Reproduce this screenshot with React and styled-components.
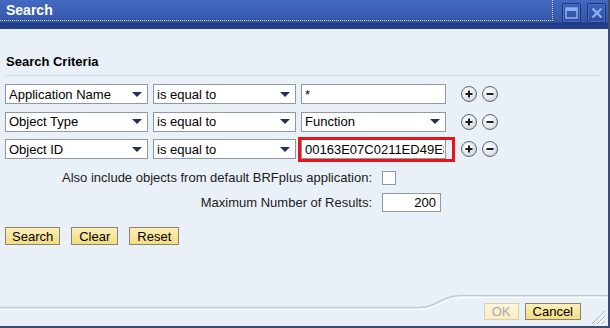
import React from 'react';
import styled, { createGlobalStyle } from 'styled-components';

const Global = createGlobalStyle`
   html, body {
      margin: 0;
      padding: 0;
      background: #e9f0f8;
   }
   body {
      font-family: 'Liberation Sans', Arial, sans-serif;
      font-size: 13px;
      color: #000;
   }
`;

const Window = styled.div`
   width: 610px;
   height: 328px;
   box-sizing: border-box;
   display: flex;
   flex-direction: column;
   background: #e9f0f8;
   border-right: 2px solid #3d4d74;
   border-bottom: 2px solid #3d4d74;
   overflow: hidden;
`;

const TitleBar = styled.div`
   height: 29px;
   flex: none;
   display: flex;
   align-items: flex-start;
   background: linear-gradient(
      to bottom,
      #4469c2 0px,
      #3c60b7 10px,
      #3457a9 22px,
      #1f3b85 23px,
      #213f8a 29px
   );
`;

const TitleFocus = styled.div`
   flex: 1;
   height: 21px;
   box-sizing: border-box;
   border: 1px dotted #c9d3ea;
   border-top: none;
   border-left: none;
   display: flex;
   align-items: center;
   padding-left: 6px;
   color: #fff;
   font-weight: bold;
   font-size: 14px;
`;

const WinButtons = styled.div`
   display: flex;
   gap: 6px;
   padding: 3px 2px 0 9px;
`;

const WinButton = styled.div`
   width: 19px;
   height: 20px;
   box-sizing: border-box;
   border: 1px solid #1d3477;
   border-radius: 2px;
   background: linear-gradient(#3d62bb, #2d4e9f);
   box-shadow: inset 0 0 0 1px #4a6fc6;
   display: flex;
   align-items: center;
   justify-content: center;
`;

const Body = styled.div`
   flex: 1;
   padding: 25px 0 0 5px;
   display: flex;
   flex-direction: column;
`;

const SectionTitle = styled.div`
   font-weight: bold;
   font-size: 13px;
   padding-left: 1px;
   padding-bottom: 6px;
   border-bottom: 1px solid #cfdae7;
   margin-right: 8px;
`;

const Criteria = styled.div`
   display: flex;
   flex-direction: column;
   gap: 7.5px;
   margin-top: 8px;
`;

const Row = styled.div`
   display: flex;
   align-items: center;
`;

const Field = styled.div`
   position: relative;
   width: ${p => p.w}px;
   height: 20px;
   margin-right: ${p => p.mr || 0}px;
   box-sizing: border-box;
   border: 1px solid #8e98a6;
   background: #fff;
   display: flex;
   align-items: center;
   padding-left: 3px;
   white-space: nowrap;
   overflow: ${p => (p.clip ? 'hidden' : 'visible')};
`;

const FieldText = styled.span`
   flex: 1;
   overflow: hidden;
   white-space: nowrap;
   margin-right: ${p => (p.clip ? 1 : 0)}px;
`;

const Arrow = styled.span`
   width: 0;
   height: 0;
   margin-right: 5px;
   border-left: 5px solid transparent;
   border-right: 5px solid transparent;
   border-top: 5px solid #22305a;
`;

const Highlight = styled.div`
   position: relative;
   &::after {
      content: '';
      position: absolute;
      left: -3px;
      top: -2px;
      right: -9px;
      bottom: -3px;
      border: 3px solid #e8141a;
      pointer-events: none;
   }
`;

const RoundButtons = styled.div`
   display: flex;
   gap: 5px;
   margin-left: 15px;
`;

const Round = styled.div`
   width: 16px;
   height: 16px;
   box-sizing: border-box;
   border-radius: 50%;
   border: 1px solid #5e6673;
   background: radial-gradient(circle at 40% 35%, #ffffff 0%, #e6e9ee 50%, #b8bec8 100%);
   display: flex;
   align-items: center;
   justify-content: center;
`;

const Options = styled.div`
   display: grid;
   grid-template-columns: 367px auto;
   column-gap: 10px;
   row-gap: 8px;
   align-items: center;
   margin-top: 11px;
`;

const OptionLabel = styled.div`
   text-align: right;
   color: #1b1b1b;
`;

const Checkbox = styled.div`
   width: 14px;
   height: 14px;
   box-sizing: border-box;
   border: 1px solid #8e98a6;
   background: #fff;
`;

const NumberBox = styled.div`
   width: 59px;
   height: 19px;
   box-sizing: border-box;
   border: 1px solid #8e98a6;
   background: #fff;
   text-align: right;
   padding-right: 4px;
   line-height: 17px;
`;

const ActionRow = styled.div`
   display: flex;
   gap: 11px;
   margin-top: 15px;
`;

const Button = styled.div`
   height: ${p => p.h || 18}px;
   box-sizing: border-box;
   padding: 0 ${p => p.px || 7}px;
   display: flex;
   align-items: center;
   border: 1px solid ${p => (p.disabled ? '#d8d1ad' : '#8a8571')};
   background: ${p =>
      p.disabled
         ? 'linear-gradient(#fdf7dd, #f8ecc0)'
         : 'linear-gradient(#fdf0b8, #f4dc82)'};
   color: ${p => (p.disabled ? '#a9a9a4' : '#000')};
   font-size: 13px;
`;

const Footer = styled.div`
   position: relative;
   height: 34px;
   flex: none;
   display: flex;
   justify-content: flex-end;
   align-items: flex-start;
   padding-top: 11px;
   box-sizing: border-box;
`;

const FooterLine = styled.svg`
   position: absolute;
   left: 0;
   top: 0;
   pointer-events: none;
`;

const FooterButtons = styled.div`
   position: relative;
   display: flex;
   gap: 6px;
   margin-right: 27px;
`;

const Grip = styled.svg`
   position: absolute;
   right: 2px;
   bottom: 1px;
`;

const Select = ({ w, mr, children }) => (
   <Field w={w} mr={mr}>
      <FieldText>{children}</FieldText>
      <Arrow />
   </Field>
);

const PlusMinus = () => (
   <RoundButtons>
      <Round>
         <svg width="8" height="8" viewBox="0 0 8 8">
            <path d="M4 0.5V7.5M0.5 4H7.5" stroke="#1f1f1f" strokeWidth="2" />
         </svg>
      </Round>
      <Round>
         <svg width="8" height="8" viewBox="0 0 8 8">
            <path d="M0.5 4H7.5" stroke="#1f1f1f" strokeWidth="2" />
         </svg>
      </Round>
   </RoundButtons>
);

const criteria = [
   { field: 'Application Name', op: 'is equal to', value: '*', type: 'text' },
   { field: 'Object Type', op: 'is equal to', value: 'Function', type: 'select' },
   { field: 'Object ID', op: 'is equal to', value: '00163E07C0211ED49E8B7A', type: 'marked' },
];

const App = () => {
   return (
      <>
         <Global />
         <Window>
            <TitleBar>
               <TitleFocus>Search</TitleFocus>
               <WinButtons>
                  <WinButton>
                     <svg width="13" height="12" viewBox="0 0 13 12">
                        <rect x="1" y="1" width="11" height="10" fill="none" stroke="#8fb0ee" strokeWidth="1.5" />
                        <rect x="1" y="1" width="11" height="3" fill="#8fb0ee" />
                     </svg>
                  </WinButton>
                  <WinButton>
                     <svg width="12" height="12" viewBox="0 0 12 12">
                        <path d="M1.5 1.5L10.5 10.5M10.5 1.5L1.5 10.5" stroke="#8fb0ee" strokeWidth="2.4" />
                     </svg>
                  </WinButton>
               </WinButtons>
            </TitleBar>
            <Body>
               <SectionTitle>Search Criteria</SectionTitle>
               <Criteria>
                  {criteria.map(c => (
                     <Row key={c.field}>
                        <Select w={143} mr={5}>{c.field}</Select>
                        <Select w={143} mr={5}>{c.op}</Select>
                        {c.type === 'text' && (
                           <Field w={145}>
                              <FieldText>{c.value}</FieldText>
                           </Field>
                        )}
                        {c.type === 'select' && <Select w={145}>{c.value}</Select>}
                        {c.type === 'marked' && (
                           <Highlight>
                              <Field w={145} clip>
                                 <FieldText clip>{c.value}</FieldText>
                              </Field>
                           </Highlight>
                        )}
                        <PlusMinus />
                     </Row>
                  ))}
               </Criteria>
               <Options>
                  <OptionLabel>Also include objects from default BRFplus application:</OptionLabel>
                  <Checkbox />
                  <OptionLabel>Maximum Number of Results:</OptionLabel>
                  <NumberBox>200</NumberBox>
               </Options>
               <ActionRow>
                  <Button px={6}>Search</Button>
                  <Button>Clear</Button>
                  <Button>Reset</Button>
               </ActionRow>
            </Body>
            <Footer>
               <FooterLine width="608" height="20" viewBox="0 0 608 20">
                  <path d="M0 15.5H418C438 15.5 440 3.5 462 3.5H608" fill="none" stroke="#c2ccd9" strokeWidth="1.5" />
                  <path d="M0 17.5H419C439 17.5 441 5.5 463 5.5H608" fill="none" stroke="#ffffff" strokeWidth="1" />
               </FooterLine>
               <FooterButtons>
                  <Button h={17} px={7} disabled>OK</Button>
                  <Button h={17} px={7}>Cancel</Button>
               </FooterButtons>
               <Grip width="18" height="18" viewBox="0 0 18 18">
                  <path d="M17 4L4 17M17 9L9 17M17 14L14 17" stroke="#a9b1bd" strokeWidth="1" />
                  <path d="M17 5L5 17M17 10L10 17M17 15L15 17" stroke="#ffffff" strokeWidth="1" />
               </Grip>
            </Footer>
         </Window>
      </>
   );
};

export default App;
